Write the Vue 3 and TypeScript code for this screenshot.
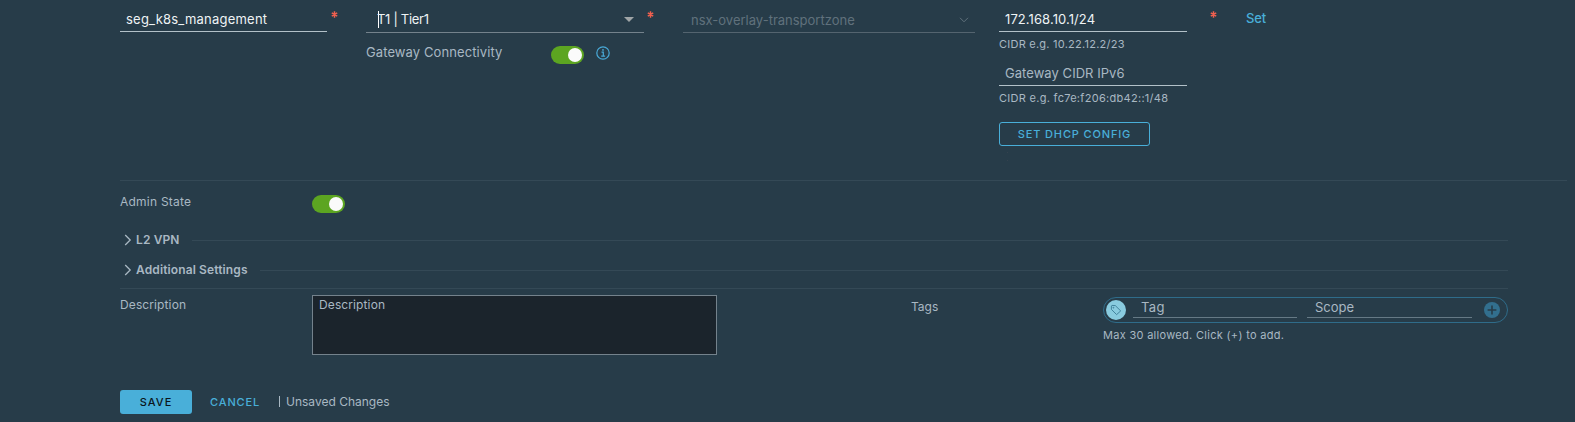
<script setup lang="ts">
import { ref } from 'vue'

const name = ref('seg_k8s_management')
const gateway = 'T1 | Tier1'
const transportZone = 'nsx-overlay-transportzone'
const cidrV4 = '172.168.10.1/24'
const gatewayConnected = ref(true)
const adminState = ref(true)
const sections = [
  { title: 'L2 VPN', key: 'vpn' },
  { title: 'Additional Settings', key: 'additional' },
]
</script>

<template>
  <main class="segment-form">
    <section class="top-row">
      <div class="column">
        <div class="field name-field"><span class="name-text">{{ name }}</span></div>
        <svg class="required name-required" viewBox="0 0 8 8"><path d="M4 .4v7.2M.9 2.2l6.2 3.6M.9 5.8l6.2-3.6" /></svg>
      </div>

      <div class="column">
        <div class="field select-field">
          <i class="caret"></i><span class="gateway-text">{{ gateway }}</span>
          <svg class="arrow" viewBox="0 0 10 5"><path d="M0 0h10L5 5z" /></svg>
        </div>
        <svg class="required gateway-required" viewBox="0 0 8 8"><path d="M4 .4v7.2M.9 2.2l6.2 3.6M.9 5.8l6.2-3.6" /></svg>
        <div class="connectivity">
          <span class="connectivity-label">Gateway Connectivity</span>
          <button class="toggle" :class="{ on: gatewayConnected }" aria-label="Gateway Connectivity" @click="gatewayConnected = !gatewayConnected"></button>
          <svg class="info" viewBox="0 0 14 14">
            <circle cx="7" cy="7" r="6.2" />
            <path d="M5.5 6.1h1.8v4M5.2 10.2h3.9" />
            <circle class="dot" cx="7" cy="3.9" r="0.9" />
          </svg>
        </div>
      </div>

      <div class="column">
        <div class="field zone-field">
          <span>{{ transportZone }}</span>
          <svg class="chevron-down" viewBox="0 0 10 6"><path d="M1 .8l4 4 4-4" /></svg>
        </div>
      </div>

      <div class="column">
        <div class="field cidr-field"><span class="cidr-text">{{ cidrV4 }}</span></div>
        <svg class="required cidr-required" viewBox="0 0 8 8"><path d="M4 .4v7.2M.9 2.2l6.2 3.6M.9 5.8l6.2-3.6" /></svg>
        <p class="hint">CIDR e.g. 10.22.12.2/23</p>
        <div class="field ipv6-field"><span>Gateway CIDR IPv6</span></div>
        <p class="hint hint-v6">CIDR e.g. fc7e:f206:db42::1/48</p>
        <button class="dhcp">SET DHCP CONFIG</button>
        <span class="marks"></span>
      </div>

      <div class="column"><a class="set-link">Set</a></div>
    </section>

    <section class="admin">
      <span class="label admin-label">Admin State</span>
      <button class="toggle" :class="{ on: adminState }" aria-label="Admin State" @click="adminState = !adminState"></button>
    </section>

    <div v-for="section in sections" :key="section.key" class="section-head" :class="section.key">
      <svg class="chevron-right" viewBox="0 0 8 12"><path d="M1.2 1l5 5-5 5" /></svg>
      <strong>{{ section.title }}</strong>
      <span class="rule"></span>
    </div>

    <section class="details">
      <span class="label description-label">Description</span>
      <div class="description-box">Description</div>
      <span class="label tags-label">Tags</span>
      <div class="tags">
        <div class="tag-pill">
          <span class="tag-badge">
            <svg viewBox="0 0 12 12">
              <path d="M1.4 1.9v3.5l5.2 5.2 4.1-3.7-5.4-5.3-3.4-.2z" />
              <circle cx="3.4" cy="3.7" r=".45" />
            </svg>
          </span>
          <span class="tag-input tag-name">Tag</span>
          <span class="tag-input tag-scope">Scope</span>
          <svg class="plus" viewBox="0 0 16 16"><circle cx="8" cy="8" r="8" /><path d="M8 3.6v8.8M3.6 8h8.8" /></svg>
        </div>
        <p class="tags-hint">Max 30 allowed. Click (+) to add.</p>
      </div>
    </section>

    <footer class="actions">
      <button class="save">SAVE</button>
      <a class="cancel">CANCEL</a>
      <span class="bar"></span>
      <span class="unsaved">Unsaved Changes</span>
    </footer>
  </main>
</template>

<style>
body {
  background: #273c49;
}
</style>

<style scoped>
.segment-form {
  box-sizing: border-box;
  width: 1575px;
  height: 422px;
  padding-left: 120px;
  overflow: hidden;
  background: #273c49;
  color: #a9b8c3;
  font: 13px/20px Inter, 'Open Sans', sans-serif;
}
p {
  margin: 0;
}
button {
  margin: 0;
  padding: 0;
  font-family: inherit;
}
svg {
  display: block;
  flex: none;
  fill: none;
}
.top-row {
  box-sizing: border-box;
  display: grid;
  grid-template-columns: 246px 317px 316px 247px 1fr;
  width: 1447px;
  height: 181px;
  border-bottom: 1px solid #344956;
}
.column {
  position: relative;
}
.field {
  box-sizing: border-box;
  display: flex;
  height: 32px;
  padding-top: 9px;
  border-bottom: 1px solid #b3c1c9;
}
.name-field {
  width: 207px;
  padding-left: 6px;
  color: #eef3f5;
}
.name-text {
  letter-spacing: 0.22px;
}
.required {
  position: absolute;
  top: 11px;
  width: 7px;
  height: 7px;
  stroke: #f0604f;
  stroke-width: 1.7;
}
.name-required {
  left: 210.5px;
}
.gateway-required {
  left: 281px;
}
.cidr-required {
  left: 210.5px;
}
.select-field {
  width: 278px;
  height: 33px;
  padding-left: 12px;
  border-color: #74828c;
  color: #eef3f5;
}
.caret {
  width: 1px;
  height: 17px;
  margin: 2px -2px 0 0;
  background: #fff;
}
.gateway-text {
  letter-spacing: -0.3px;
}
.arrow {
  width: 10px;
  height: 5px;
  margin: 8px 10px 0 auto;
  fill: #a0a5a7;
}
.connectivity {
  display: flex;
  height: 30px;
  padding-top: 10px;
}
.connectivity-label {
  width: 185px;
  line-height: 19px;
  letter-spacing: 0.1px;
}
.toggle {
  display: flex;
  flex: none;
  width: 33px;
  height: 18px;
  padding: 2px;
  border: 0;
  border-radius: 9px;
  background: #65747e;
}
.toggle::after {
  width: 14px;
  height: 14px;
  border-radius: 50%;
  background: #fafafa;
  content: '';
}
.toggle.on {
  justify-content: flex-end;
  background: #5ca521;
}
.connectivity .toggle {
  margin-top: 3px;
}
.info {
  width: 14px;
  height: 14px;
  margin: 3px 0 0 12px;
  stroke: #49a9d7;
  stroke-width: 1.2;
}
.info .dot {
  fill: #49a9d7;
  stroke: none;
}
.zone-field {
  width: 292px;
  height: 33px;
  padding: 10px 6px 0 8px;
  border-color: #54646f;
  color: #60717c;
}
.chevron-down {
  width: 10px;
  height: 6px;
  margin: 7px 0 0 auto;
  stroke: #60717c;
  stroke-width: 1;
}
.cidr-field,
.ipv6-field {
  width: 188px;
  padding-left: 6px;
}
.cidr-field {
  color: #eef3f5;
}
.cidr-text {
  letter-spacing: 0.09px;
}
.ipv6-field {
  letter-spacing: 0.05px;
}
.hint {
  box-sizing: border-box;
  height: 22px;
  padding-top: 2px;
  font-size: 11px;
  letter-spacing: 0.24px;
}
.hint-v6 {
  letter-spacing: 0.29px;
}
.dhcp {
  box-sizing: border-box;
  display: block;
  width: 151px;
  height: 24px;
  margin-top: 14px;
  border: 1px solid #49afd9;
  border-radius: 3px;
  background: transparent;
  color: #49afd9;
  font-size: 11px;
  font-weight: 450;
  line-height: 22px;
  letter-spacing: 0.85px;
}
.marks {
  display: block;
  width: 1px;
  height: 7px;
  margin: 6px 0 0 8px;
  border: solid #34424e;
  border-width: 1px 0;
}
.set-link {
  display: block;
  padding-top: 8px;
  color: #49afd9;
  font-weight: 500;
  letter-spacing: -0.2px;
}
.label {
  font-size: 12px;
}
.admin {
  display: flex;
  height: 47px;
  padding-top: 11px;
  box-sizing: border-box;
}
.admin-label {
  width: 192px;
  letter-spacing: 0.23px;
}
.admin .toggle {
  margin-top: 3px;
}
.section-head {
  display: flex;
  align-items: center;
  width: 1388px;
  height: 24px;
  font-size: 12px;
}
.vpn {
  margin-bottom: 6px;
}
.chevron-right {
  width: 8px;
  height: 12px;
  margin-left: 4px;
  stroke: #a9b8c3;
  stroke-width: 1.3;
}
.section-head strong {
  margin: -1px 12px 0 4px;
  font-weight: 600;
  letter-spacing: 0.12px;
}
.rule {
  flex: 1;
  height: 1px;
  background: #344956;
}
.details {
  box-sizing: border-box;
  display: grid;
  grid-template-columns: 192px 599px 192px 405px;
  width: 1388px;
  height: 102px;
  margin-top: 6px;
  border-top: 1px solid #344956;
}
.description-label {
  padding-top: 6px;
  letter-spacing: 0.11px;
}
.description-box {
  box-sizing: border-box;
  width: 405px;
  height: 60px;
  margin-top: 6px;
  padding: 0 6px;
  border: 1px solid #74828c;
  background: #1b242c;
  font-size: 12px;
  line-height: 18px;
  letter-spacing: 0.11px;
}
.tags-label {
  padding-top: 8px;
}
.tag-pill {
  box-sizing: border-box;
  display: flex;
  height: 26px;
  margin-top: 8px;
  border: 1px solid #2f6c8a;
  border-radius: 13px;
}
.tag-badge {
  display: grid;
  flex: none;
  place-items: center;
  width: 20px;
  height: 20px;
  margin: 2px 7px 0 2px;
  border-radius: 50%;
  background: #89cbdf;
}
.tag-badge svg {
  width: 12px;
  height: 12px;
  stroke: #3b7c96;
  stroke-width: 0.9;
}
.tag-input {
  box-sizing: border-box;
  height: 20px;
  padding-left: 8px;
  border-bottom: 1px solid #657985;
  line-height: 19px;
}
.tag-name {
  width: 164px;
  margin-right: 10px;
  letter-spacing: 0.39px;
}
.tag-scope {
  width: 165px;
}
.plus {
  width: 16px;
  height: 16px;
  margin: 4px 0 0 12px;
  fill: #326f8e;
}
.plus path {
  stroke: #273c49;
  stroke-width: 1.6;
}
.tags-hint {
  padding-top: 2px;
  font-size: 11px;
  letter-spacing: 0.3px;
}
.actions {
  display: flex;
  height: 24px;
  line-height: 24px;
}
.save {
  width: 72px;
  height: 24px;
  border: 0;
  border-radius: 3px;
  background: #49afd9;
  color: #0b151c;
  font-size: 11px;
  font-weight: 450;
  line-height: 24px;
  letter-spacing: 1.05px;
}
.cancel {
  width: 69px;
  margin-left: 18px;
  color: #49afd9;
  font-size: 11px;
  font-weight: 450;
  letter-spacing: 0.88px;
}
.bar {
  width: 1px;
  height: 11px;
  margin-top: 6px;
  background: #a9b8c3;
}
.unsaved {
  margin-left: 6px;
  font-size: 12px;
  line-height: 23px;
}
</style>
